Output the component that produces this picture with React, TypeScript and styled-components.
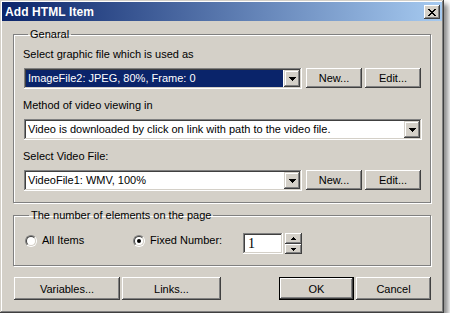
import React from "react";
import styled, { createGlobalStyle, css } from "styled-components";

const FACE = "#d4d0c8";

const GlobalStyle = createGlobalStyle`
  html, body { margin: 0; padding: 0; background: #fff; }
  body {
    font-family: "Liberation Sans", Arial, sans-serif;
    font-size: 11px;
    color: #000;
  }
  * { box-sizing: border-box; }
`;

const raised = css`
  box-shadow: inset -1px -1px 0 #404040, inset 1px 1px 0 #fff,
    inset -2px -2px 0 #808080, inset 2px 2px 0 ${FACE};
`;

const sunken = css`
  box-shadow: inset -1px -1px 0 #fff, inset 1px 1px 0 #808080,
    inset -2px -2px 0 ${FACE}, inset 2px 2px 0 #404040;
`;

const Page = styled.div`
  padding: 0;
`;

const Window = styled.div`
  width: 444px;
  height: 313px;
  padding: 2px;
  background: ${FACE};
  display: flex;
  flex-direction: column;
  box-shadow: inset -1px -1px 0 #404040, inset 1px 1px 0 ${FACE},
    inset -2px -2px 0 #808080, inset 2px 2px 0 #fff,
    4px 4px 5px rgba(0, 0, 0, 0.45);
`;

const TitleBar = styled.div`
  flex: none;
  height: 19px;
  padding: 0 2px 0 3px;
  display: flex;
  align-items: center;
  justify-content: space-between;
  background: linear-gradient(to right, #0a246a, #a6caf0);
`;

const Title = styled.span`
  font: bold 12px "Liberation Sans", Arial, sans-serif;
  color: #fff;
  letter-spacing: 0.1px;
`;

const CloseButton = styled.div`
  width: 16px;
  height: 14px;
  margin-top: 1px;
  background: ${FACE};
  display: flex;
  align-items: center;
  justify-content: center;
  ${raised};
`;

const Body = styled.div`
  flex: 1;
  display: flex;
  flex-direction: column;
  padding: 7px 11px 0;
`;

const Group = styled.fieldset<{ $mt?: number; $pad: string }>`
  margin: ${(p) => p.$mt ?? 0}px 0 0;
  padding: ${(p) => p.$pad};
  min-width: 0;
  border: 1px solid #808080;
  box-shadow: 1px 1px 0 #fff, inset 1px 1px 0 #fff;
`;

const Legend = styled.legend`
  margin-left: 4px;
  padding: 0 2px;
  line-height: 13px;
  font-size: 11px;
`;

const Label = styled.div<{ $mt?: number }>`
  line-height: 13px;
  margin: ${(p) => p.$mt ?? 0}px 0 7px -1px;
`;

const Row = styled.div`
  display: flex;
  align-items: flex-start;
`;

const Combo = styled.div<{ $w?: number }>`
  height: 21px;
  width: ${(p) => (p.$w ? `${p.$w}px` : "100%")};
  flex: none;
  padding: 2px;
  background: #fff;
  display: flex;
  ${sunken};
`;

const ComboText = styled.div<{ $selected?: boolean }>`
  flex: 1;
  margin-right: 1px;
  padding-left: 2px;
  line-height: 17px;
  white-space: nowrap;
  overflow: hidden;
  background: ${(p) => (p.$selected ? "#0a246a" : "#fff")};
  color: ${(p) => (p.$selected ? "#fff" : "#000")};
`;

const ArrowButton = styled.div`
  width: 16px;
  height: 17px;
  flex: none;
  background: ${FACE};
  display: flex;
  align-items: center;
  justify-content: center;
  box-shadow: inset -1px -1px 0 #404040, inset 1px 1px 0 ${FACE},
    inset -2px -2px 0 #808080, inset 2px 2px 0 #fff;
`;

const Button = styled.button<{ $w: number; $h: number; $ml?: number; $default?: boolean }>`
  width: ${(p) => p.$w}px;
  height: ${(p) => p.$h}px;
  margin: 0 0 0 ${(p) => p.$ml ?? 0}px;
  padding: 0;
  flex: none;
  border: ${(p) => (p.$default ? "1px solid #000" : "none")};
  background: ${FACE};
  font: 11px "Liberation Sans", Arial, sans-serif;
  color: #000;
  ${raised};
`;

const RadioRow = styled.div`
  display: flex;
  align-items: flex-start;
  height: 21px;
`;

const RadioOption = styled.label<{ $w: number }>`
  width: ${(p) => p.$w}px;
  flex: none;
  margin-top: 1px;
  height: 13px;
  display: flex;
  align-items: center;
  gap: 5px;
  line-height: 13px;
`;

const RadioOuter = styled.span`
  width: 12px;
  height: 12px;
  border-radius: 50%;
  border: 1px solid;
  border-color: #808080 #fff #fff #808080;
  flex: none;
  display: flex;
`;

const RadioInner = styled.span`
  flex: 1;
  border-radius: 50%;
  border: 1px solid;
  border-color: #404040 ${FACE} ${FACE} #404040;
  background: #fff;
  display: flex;
  align-items: center;
  justify-content: center;
`;

const RadioDot = styled.span`
  width: 4px;
  height: 4px;
  border-radius: 50%;
  background: #000;
`;

const SpinInput = styled.div`
  width: 40px;
  height: 21px;
  flex: none;
  padding-left: 5px;
  background: #fff;
  font: 14px "Liberation Serif", "Times New Roman", serif;
  line-height: 21px;
  ${sunken};
`;

const SpinButtons = styled.div`
  width: 17px;
  height: 21px;
  margin-left: 2px;
  display: flex;
  flex-direction: column;
`;

const SpinButton = styled.div<{ $h: number }>`
  height: ${(p) => p.$h}px;
  flex: none;
  background: ${FACE};
  display: flex;
  align-items: center;
  justify-content: center;
  box-shadow: inset -1px -1px 0 #404040, inset 1px 1px 0 #fff,
    inset -2px -2px 0 #808080;
`;

const ButtonBar = styled.div`
  display: flex;
  margin: 11px 0 0 1px;
`;

const Spacer = styled.div`
  flex: 1;
`;

const DownArrow = ({ w = 7, h = 4 }: { w?: number; h?: number }) => (
  <svg width={w} height={h} viewBox={`0 0 ${w} ${h}`} shapeRendering="crispEdges">
    <polygon points={`0,0 ${w},0 ${w / 2},${h}`} fill="#000" />
  </svg>
);

const UpArrow = ({ w = 5, h = 3 }: { w?: number; h?: number }) => (
  <svg width={w} height={h} viewBox={`0 0 ${w} ${h}`} shapeRendering="crispEdges">
    <polygon points={`0,${h} ${w},${h} ${w / 2},0`} fill="#000" />
  </svg>
);

const CloseGlyph = () => {
  const rows: [number, number][][] = [
    [[0, 2], [6, 2]],
    [[1, 2], [5, 2]],
    [[2, 4]],
    [[3, 2]],
    [[2, 4]],
    [[1, 2], [5, 2]],
    [[0, 2], [6, 2]],
  ];
  return (
    <svg width={8} height={7} viewBox="0 0 8 7" shapeRendering="crispEdges">
      {rows.map((r, y) =>
        r.map(([x, w], i) => <rect key={`${y}-${i}`} x={x} y={y} width={w} height={1} fill="#000" />)
      )}
    </svg>
  );
};

const ComboBox = ({ text, selected, w }: { text: string; selected?: boolean; w?: number }) => (
  <Combo $w={w}>
    <ComboText $selected={selected}>{text}</ComboText>
    <ArrowButton>
      <DownArrow />
    </ArrowButton>
  </Combo>
);

const Radio = ({ label, checked, w }: { label: string; checked?: boolean; w: number }) => (
  <RadioOption $w={w}>
    <RadioOuter>
      <RadioInner>{checked && <RadioDot />}</RadioInner>
    </RadioOuter>
    <span>{label}</span>
  </RadioOption>
);

export default function App() {
  return (
    <Page>
      <GlobalStyle />
      <Window>
        <TitleBar>
          <Title>Add HTML Item</Title>
          <CloseButton>
            <CloseGlyph />
          </CloseButton>
        </TitleBar>
        <Body>
          <Group $pad="7px 8px 11px 10px">
            <Legend>Genaral</Legend>
            <Label>Select graphic file which is used as</Label>
            <Row>
              <ComboBox text="ImageFile2: JPEG, 80%, Frame: 0" selected w={278} />
              <Button $w={56} $h={20} $ml={4}>New...</Button>
              <Button $w={56} $h={20} $ml={3}>Edit...</Button>
            </Row>
            <Label $mt={10}>Method of video viewing in</Label>
            <ComboBox text="Video is downloaded by click on link with path to the video file." />
            <Label $mt={10}>Select Video File:</Label>
            <Row>
              <ComboBox text="VideoFile1: WMV, 100%" w={278} />
              <Button $w={56} $h={20} $ml={4}>New...</Button>
              <Button $w={56} $h={20} $ml={3}>Edit...</Button>
            </Row>
          </Group>
          <Group $mt={6} $pad="11px 8px 11px 11px">
            <Legend>The number of elements on the page</Legend>
            <RadioRow>
              <Radio label="All Items" w={108} />
              <Radio label="Fixed Number:" checked w={110} />
              <SpinInput>1</SpinInput>
              <SpinButtons>
                <SpinButton $h={11}>
                  <UpArrow />
                </SpinButton>
                <SpinButton $h={10}>
                  <DownArrow w={5} h={3} />
                </SpinButton>
              </SpinButtons>
            </RadioRow>
          </Group>
          <ButtonBar>
            <Button $w={106} $h={23}>Variables...</Button>
            <Button $w={99} $h={23} $ml={2}>Links...</Button>
            <Spacer />
            <Button $w={75} $h={23} $default>OK</Button>
            <Button $w={75} $h={23} $ml={2}>Cancel</Button>
          </ButtonBar>
        </Body>
      </Window>
    </Page>
  );
}
